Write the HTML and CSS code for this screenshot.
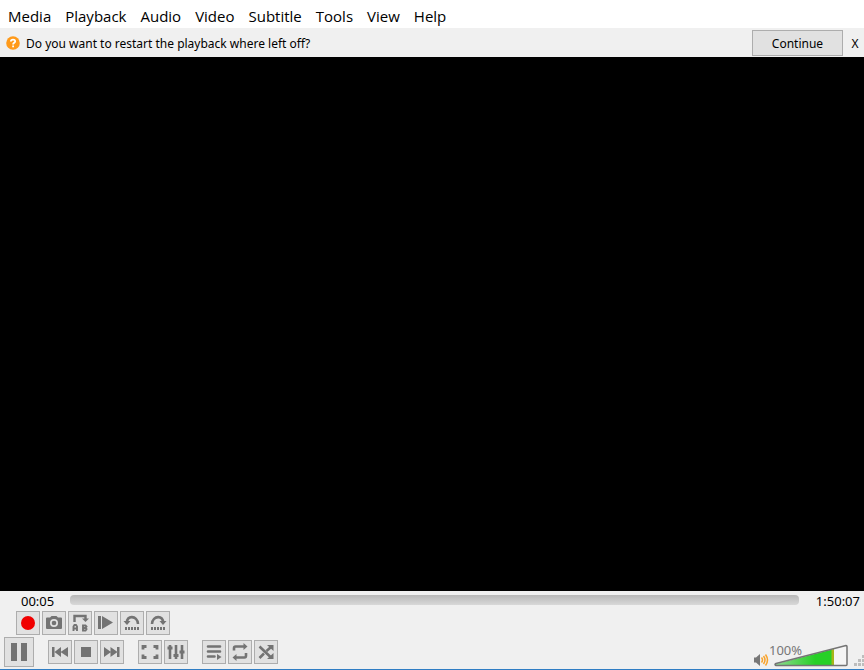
FILE: index.html
```html
<!DOCTYPE html>
<html lang="en">
<head>
<meta charset="utf-8">
<title>Media player</title>
<link rel="stylesheet" href="styles.css">
</head>
<body>
<nav class="menu" aria-label="Main menu">
  <a href="#">Media</a><a href="#">Playback</a><a href="#">Audio</a><a href="#">Video</a><a href="#">Subtitle</a><a href="#">Tools</a><a href="#">View</a><a href="#">Help</a>
</nav>
<div class="resume">
  <svg class="question" viewBox="0 0 14 14" aria-hidden="true"><circle cx="7" cy="7" r="6.8" fill="#ff9a1a"/><path d="M4.9 5.4C4.9 3 9.2 3 9.2 5.3C9.2 6.8 7.1 6.8 7.1 8.4M7.1 9.6V11.200" fill="none" stroke="#fff" stroke-width="1.8"/></svg>
  <p>Do you want to restart the playback where left off?</p>
  <button class="continue" type="button">Continue</button>
  <button class="close" type="button">X</button>
</div>
<main class="video"></main>
<footer class="controls">
  <div class="seek">
    <span class="elapsed">00:05</span>
    <input class="track" type="range" min="0" max="6607" value="5" aria-label="Position">
    <span class="total">1:50:07</span>
  </div>
  <div class="advanced">
    <button type="button" aria-label="Record"><svg viewBox="0 0 24 24"><circle cx="12" cy="12" r="7" fill="#f00000"/></svg></button>
    <button type="button" aria-label="Snapshot"><svg viewBox="0 0 24 24"><path fill="currentColor" fill-rule="evenodd" d="M5 6.500H8L9.500 5H14.500L16 6.500H19Q20 6.500 20 7.500V17Q20 18 19 18H5Q4 18 4 17V7.500Q4 6.500 5 6.500ZM12 8A4 4 0 1 0 12 16A4 4 0 1 0 12 8Z"/><circle cx="12" cy="12" r="2.300" fill="currentColor"/></svg></button>
    <button type="button" aria-label="Loop from A to B"><svg viewBox="0 0 24 24"><path d="M6.500 11V5H17.500V8" fill="none" stroke="currentColor" stroke-width="2.400"/><path d="M14 7.500H21L17.500 11Z" fill="currentColor"/><path d="M5.500 20V15.500L6.500 14H8L9 15.500V20M5.500 17.500H9M15 14.500H17.500L18.500 15.500L17.500 17L18.500 18L17.500 19.500H15ZM15 17H17.500" fill="none" stroke="currentColor" stroke-width="1.900"/></svg></button>
    <button type="button" aria-label="Next frame"><svg viewBox="0 0 24 24"><path d="M4 5H7V18H4ZM8 5L19 11.500L8 18Z" fill="currentColor"/></svg></button>
    <button type="button" aria-label="Step back"><svg viewBox="0 0 24 24"><path d="M7 12C6 4 17.500 4 18 13" fill="none" stroke="currentColor" stroke-width="2.600"/><path d="M3.500 10H10.500L7 14Z" fill="currentColor"/><path d="M5 17.500H19" stroke="currentColor" stroke-width="3" stroke-dasharray="2 1"/></svg></button>
    <button type="button" aria-label="Step forward"><svg viewBox="0 0 24 24"><path d="M6 13C6.500 4 18 4 17 12" fill="none" stroke="currentColor" stroke-width="2.600"/><path d="M13.500 10H20.500L17 14Z" fill="currentColor"/><path d="M5 17.500H19" stroke="currentColor" stroke-width="3" stroke-dasharray="2 1"/></svg></button>
  </div>
  <div class="transport">
    <button class="pause" type="button" aria-label="Pause"><svg viewBox="0 0 30 30"><path d="M7 6H13V24H7ZM17 6H23V24H17Z" fill="currentColor"/></svg></button>
    <div class="group">
      <button type="button" aria-label="Previous"><svg viewBox="0 0 24 24"><path d="M4 7H6.500V17H4ZM13 7V17L6.500 12ZM20 7V17L12.500 12Z" fill="currentColor"/></svg></button>
      <button type="button" aria-label="Stop"><svg viewBox="0 0 24 24"><path d="M7 7H17V17H7Z" fill="currentColor"/></svg></button>
      <button type="button" aria-label="Next"><svg viewBox="0 0 24 24"><path d="M4 7V17L11 12ZM10.500 7V17L17.500 12ZM17 7H19.500V17H17Z" fill="currentColor"/></svg></button>
    </div>
    <div class="group">
      <button type="button" aria-label="Fullscreen"><svg viewBox="0 0 24 24"><path d="M5 9.500V6.500H8.500M15.500 6.500H19V9.500M19 14.500V17.500H15.500M8.500 17.500H5V14.500" fill="none" stroke="currentColor" stroke-width="2.800"/></svg></button>
      <button type="button" aria-label="Extended settings"><svg viewBox="0 0 24 24"><path d="M6 5V19M12 5V19M18 5V19" stroke="currentColor" stroke-width="2.600"/><path d="M3.500 8H8.500M9.500 15.500H14.500M15.500 12H20.500" stroke="currentColor" stroke-width="3"/></svg></button>
    </div>
    <div class="group">
      <button type="button" aria-label="Playlist"><svg viewBox="0 0 24 24"><path d="M6 6.500H18M6 11.500H18M6 16.500H12.500" stroke="currentColor" stroke-width="2.600" stroke-linecap="round"/><path d="M15 14L19.500 17L15 20Z" fill="currentColor"/></svg></button>
      <button type="button" aria-label="Loop"><svg viewBox="0 0 24 24"><path d="M6 10.500V8.500Q6 6.500 7.500 6.500H17M18 13V15.500Q18 17.500 16.500 17.500H7" fill="none" stroke="currentColor" stroke-width="2.600"/><path d="M15.500 3L19.500 6.500L15.500 10ZM8.500 14L4.500 17.500L8.500 21Z" fill="currentColor"/></svg></button>
      <button type="button" aria-label="Random"><svg viewBox="0 0 24 24"><path d="M5.500 6.500L16.500 17M5.500 18L10 13.500M12.500 11L16.500 7.500" fill="none" stroke="currentColor" stroke-width="2.600"/><path d="M13 5H19.500V11ZM13 19H19.500V13Z" fill="currentColor"/></svg></button>
    </div>
    <div class="sound">
      <svg class="speaker" viewBox="0 0 16 14" aria-hidden="true"><path d="M1 4.500H3L7 1V13L3 9.500H1Z" fill="#777"/><path d="M8.500 4.500Q10.500 7 8.500 9.500M10.500 3Q13.500 7 10.500 11M12.500 1.500Q16.500 7 12.500 12.500" fill="none" stroke="#f8a32c" stroke-width="1.500"/></svg>
      <div class="volume">
        <svg viewBox="0 0 76 24" aria-hidden="true">
          <defs><linearGradient id="level"><stop offset="0" stop-color="#8fd98f"/><stop offset=".7" stop-color="#27d027"/><stop offset="1" stop-color="#27d027"/></linearGradient></defs>
          <path d="M2 20L73 1.500V21.500H2Z" fill="#f5f5f5"/>
          <path d="M2 20L58 5.600V21.500H2Z" fill="url(#level)"/>
          <path d="M57.500 5.600L60 5V21.500H57.500Z" fill="#a6b51a"/>
          <path d="M2 19.500L72 1.500Q73 1.500 73 2.500V20.500Q73 21.500 72 21.500H2Q0 20.500 2 19.500Z" fill="none" stroke="#747474" stroke-width="1.500"/>
        </svg>
        <label for="volume">100%</label>
        <input id="volume" type="range" min="0" max="125" value="100">
      </div>
      <svg class="grip" viewBox="0 0 10 12" aria-hidden="true"><path d="M8 0H10V3H8ZM4 4H7V7H4ZM8 4H10V7H8ZM0 8H3V11H0ZM4 8H7V11H4ZM8 8H10V11H8Z" fill="#bdbdbd"/></svg>
    </div>
  </div>
</footer>
</body>
</html>
```
FILE: styles.css
```css
* { box-sizing: border-box; }

body {
  margin: 0;
  min-height: 100vh;
  display: flex;
  flex-direction: column;
  background: #f0f0f0;
  color: #000;
  font: 12px/16px "Noto Sans", "Open Sans", sans-serif;
}

button {
  margin: 0;
  padding: 0;
  border: 1px solid #adadad;
  background: #e1e1e1;
  color: inherit;
  font: inherit;
}

svg { display: block; }

.menu {
  display: flex;
  gap: 14px;
  height: 28px;
  padding: 6px 8px 0;
  background: #fff;
  font: 15px/20px "Open Sans", sans-serif;
}

.menu a { color: #000; text-decoration: none; }

.resume {
  display: flex;
  align-items: center;
  height: 29px;
  padding-left: 6px;
}

.resume p { flex: 1; margin: 0; padding: 2px 0 0 6px; }
.question { width: 14px; height: 14px; }
.continue { width: 91px; height: 26px; padding-top: 2px; }
.close { width: 21px; height: 26px; border: 0; padding: 2px 0 0 3px; background: none; }

.video { flex: 1; background: #000; }

.controls { padding-bottom: 1px; border-bottom: 1px solid #2f7dc4; }

.seek {
  display: flex;
  align-items: center;
  height: 20px;
  font-size: 13px;
}

.elapsed { width: 70px; padding-left: 21px; }
.total { width: 65px; padding-right: 4px; text-align: right; }

.track {
  flex: 1;
  min-width: 0;
  height: 10px;
  margin: 0 0 2px;
  appearance: none;
  border-radius: 4px;
  background: linear-gradient(#b8b8b8, #d8d8d8);
}

.track::-webkit-slider-thumb { appearance: none; width: 0; height: 0; }

.advanced, .group { display: flex; gap: 2px; }
.advanced { padding-left: 16px; }

.advanced button, .group button {
  width: 24px;
  height: 24px;
  color: #737373;
}

.advanced svg, .group svg { width: 24px; height: 24px; margin: -1px; }

.transport {
  display: flex;
  align-items: center;
  gap: 14px;
  height: 32px;
  margin-top: 1px;
  padding-left: 4px;
}

.pause { width: 30px; height: 30px; color: #737373; }
.pause svg { width: 30px; height: 30px; margin: -1px; }

.sound {
  display: flex;
  align-items: flex-end;
  height: 32px;
  margin-left: auto;
}

.speaker { width: 16px; height: 14px; margin: 0 5px 1px 0; }
.volume { position: relative; width: 76px; height: 24px; margin-right: 4px; }
.volume svg { width: 76px; height: 24px; }
.volume label { position: absolute; left: -5px; top: -2px; color: #777; font-size: 13px; }
.volume input { position: absolute; inset: 0; width: 100%; height: 100%; margin: 0; opacity: 0; }
.grip { width: 10px; height: 12px; margin-bottom: 1px; }
```
